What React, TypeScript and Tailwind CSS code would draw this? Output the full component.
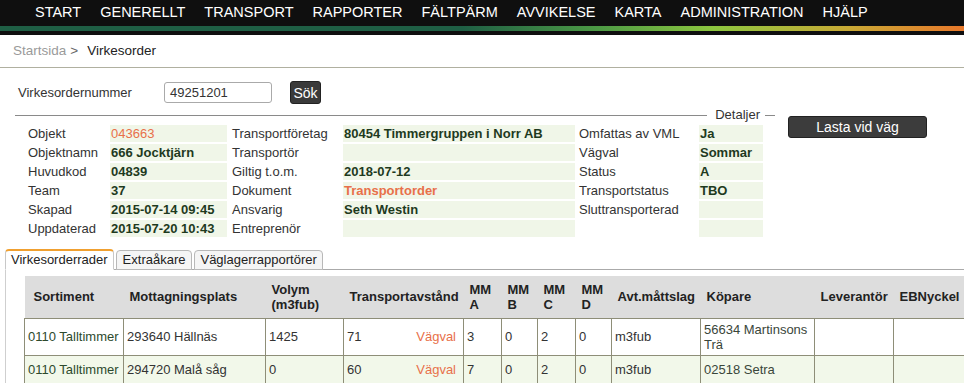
import React from 'react';

const navItems = ['START', 'GENERELLT', 'TRANSPORT', 'RAPPORTER', 'FÄLTPÄRM', 'AVVIKELSE', 'KARTA', 'ADMINISTRATION', 'HJÄLP'];

type Val = { text: string; orange?: boolean; normal?: boolean };

const details: [string, Val, string, Val, string, Val][] = [
  ['Objekt', { text: '043663', orange: true, normal: true }, 'Transportföretag', { text: '80454 Timmergruppen i Norr AB' }, 'Omfattas av VML', { text: 'Ja' }],
  ['Objektnamn', { text: '666 Jocktjärn' }, 'Transportör', { text: '' }, 'Vägval', { text: 'Sommar' }],
  ['Huvudkod', { text: '04839' }, 'Giltig t.o.m.', { text: '2018-07-12' }, 'Status', { text: 'A' }],
  ['Team', { text: '37' }, 'Dokument', { text: 'Transportorder', orange: true }, 'Transportstatus', { text: 'TBO' }],
  ['Skapad', { text: '2015-07-14 09:45' }, 'Ansvarig', { text: 'Seth Westin' }, 'Sluttransporterad', { text: '' }],
  ['Uppdaterad', { text: '2015-07-20 10:43' }, 'Entreprenör', { text: '' }, '', { text: '' }],
];

const rows = [
  { sort: '0110 Talltimmer', plats: '293640 Hällnäs', volym: '1425', avst: '71', a: '3', b: '0', c: '2', d: '0', matt: 'm3fub', kopare: '56634 Martinsons Trä', bg: 'bg-white' },
  { sort: '0110 Talltimmer', plats: '294720 Malå såg', volym: '0', avst: '60', a: '7', b: '0', c: '2', d: '0', matt: 'm3fub', kopare: '02518 Setra', bg: 'bg-[#f2f8ea]' },
];

function ValueCell({ v }: { v: Val }) {
  return (
    <div
      className={`h-[17px] bg-[#f0f6e8] pl-[1px] leading-[17px] whitespace-nowrap ${v.orange ? 'text-[#e8704a]' : 'text-[#1e3a1e]'} ${v.normal ? 'font-normal' : 'font-bold'}`}
    >
      {v.text}
    </div>
  );
}

export default function App() {
  const td = 'border border-[#8e8e78] px-[3px] py-[3px] leading-[15px] align-middle h-[28px]';
  const th = 'px-[6px] text-left font-bold leading-[15px] whitespace-nowrap align-middle';

  return (
    <div className="w-[964px] h-[383px] overflow-hidden bg-white font-['Liberation_Sans',Arial,sans-serif] text-[13px] text-[#333]">
      {/* Top menu */}
      <div className="bg-[#0f0f0f]">
        <div className="h-[26px] flex items-center gap-[19px] pl-[35px] text-white text-[14.5px]">
          {navItems.map((n) => (
            <span key={n}>{n}</span>
          ))}
        </div>
        <div className="h-[5px] bg-[linear-gradient(to_right,#1f5f45_48%,#4d9a45_62%,#8dc63f_74%,#c8a935_88%,#e8782a)]" />
        <div className="h-[4px]" />
      </div>

      {/* Breadcrumb */}
      <div className="h-[33px] border-b border-[#b0b0a0] flex items-center pl-[13px] text-[13.5px]">
        <span className="text-[#9a9a9a]">Startsida</span>
        <span className="ml-[4px] text-[#666]">&gt;</span>
        <span className="ml-[9px] text-[#222]">Virkesorder</span>
      </div>

      {/* Search */}
      <div className="pl-[15px] pt-[13px]">
        <div className="h-[23px] flex items-center">
          <span className="w-[149px] pl-[3px]">Virkesordernummer</span>
          <div className="w-[108px] h-[21px] border border-[#aaa] rounded-[3px] pl-[5px] flex items-center text-[#333]">49251201</div>
          <button className="ml-[18px] w-[31px] h-[23px] bg-[#3a3a3a] border border-[#222] rounded-[3px] text-white text-[14px] leading-none">
            Sök
          </button>
        </div>

        <div className="flex">
          {/* Details fieldset */}
          <div className="w-[760px]">
            <div className="h-[14px] mt-[4px] flex items-center">
              <div className="flex-1 h-px bg-[#8a8a8a]" />
              <span className="ml-[8px] mr-[5px] leading-[14px]">Detaljer</span>
              <div className="w-[10px] h-px bg-[#8a8a8a]" />
            </div>
            <div className="mt-[3px] pl-[13px] grid grid-cols-[82px_117px_116px_232px_124px_64px] gap-y-[2px]">
              {details.map((r, i) => (
                <React.Fragment key={i}>
                  <div className="h-[17px] leading-[17px] whitespace-nowrap">{r[0]}</div>
                  <ValueCell v={r[1]} />
                  <div className="h-[17px] leading-[17px] pl-[5px] whitespace-nowrap">{r[2]}</div>
                  <ValueCell v={r[3]} />
                  <div className="h-[17px] leading-[17px] pl-[4px] whitespace-nowrap">{r[4]}</div>
                  <ValueCell v={r[5]} />
                </React.Fragment>
              ))}
            </div>
          </div>
          <div className="ml-[13px] mt-[12px]">
            <button className="w-[139px] h-[22px] bg-[#3c3c3c] border border-[#222] rounded-[3px] text-white text-[14px] leading-none">
              Lasta vid väg
            </button>
          </div>
        </div>
      </div>

      {/* Tabs */}
      <div className="mt-[12px] ml-[5px] flex items-end gap-[2px] border-b border-[#aaa]">
        <div className="-mb-px h-[21px] px-[5px] flex items-center bg-white border border-[#c8c8c8] border-t-2 border-t-[#f0a030] border-b-white rounded-t-[4px] text-[#222]">
          Virkesorderrader
        </div>
        <div className="-mb-px h-[20px] px-[6px] flex items-center bg-[#f5f5f5] border border-[#b8b8b8] rounded-t-[4px] text-[#222]">
          Extraåkare
        </div>
        <div className="-mb-px h-[20px] px-[5px] flex items-center bg-[#f5f5f5] border border-[#b8b8b8] rounded-t-[4px] text-[#222]">
          Väglagerrapportörer
        </div>
      </div>

      {/* Tab panel */}
      <div className="ml-[5px] border-l border-[#cfcfcf] pt-[6px] pl-[18px]">
        <table className="table-fixed border-collapse w-[940px]">
          <colgroup>
            <col className="w-[99px]" />
            <col className="w-[142px]" />
            <col className="w-[78px]" />
            <col className="w-[120px]" />
            <col className="w-[38px]" />
            <col className="w-[36px]" />
            <col className="w-[38px]" />
            <col className="w-[36px]" />
            <col className="w-[89px]" />
            <col className="w-[114px]" />
            <col className="w-[79px]" />
            <col className="w-[71px]" />
          </colgroup>
          <thead>
            <tr className="h-[42px] bg-[#dddddd] text-[#222]">
              <th className={`${th} pl-[9px]`}>Sortiment</th>
              <th className={th}>Mottagningsplats</th>
              <th className={th}>
                Volym
                <br />
                (m3fub)
              </th>
              <th className={th}>Transportavstånd</th>
              <th className={th}>
                MM
                <br />A
              </th>
              <th className={th}>
                MM
                <br />B
              </th>
              <th className={th}>
                MM
                <br />C
              </th>
              <th className={th}>
                MM
                <br />D
              </th>
              <th className={th}>Avt.måttslag</th>
              <th className={th}>Köpare</th>
              <th className={th}>Leverantör</th>
              <th className={th}>EBNyckel</th>
            </tr>
          </thead>
          <tbody>
            {rows.map((r, i) => (
              <tr key={i} className={r.bg}>
                <td className={`${td} text-[#2d4a2d] whitespace-nowrap`}>{r.sort}</td>
                <td className={td}>{r.plats}</td>
                <td className={td}>{r.volym}</td>
                <td className={`${td} pr-[7px]`}>
                  <div className="flex justify-between">
                    <span>{r.avst}</span>
                    <span className="text-[#e8704a]">Vägval</span>
                  </div>
                </td>
                <td className={td}>{r.a}</td>
                <td className={td}>{r.b}</td>
                <td className={td}>{r.c}</td>
                <td className={td}>{r.d}</td>
                <td className={td}>{r.matt}</td>
                <td className={`${td} text-[#3a463a]`}>{r.kopare}</td>
                <td className={td}></td>
                <td className={td}></td>
              </tr>
            ))}
          </tbody>
        </table>
      </div>
    </div>
  );
}
